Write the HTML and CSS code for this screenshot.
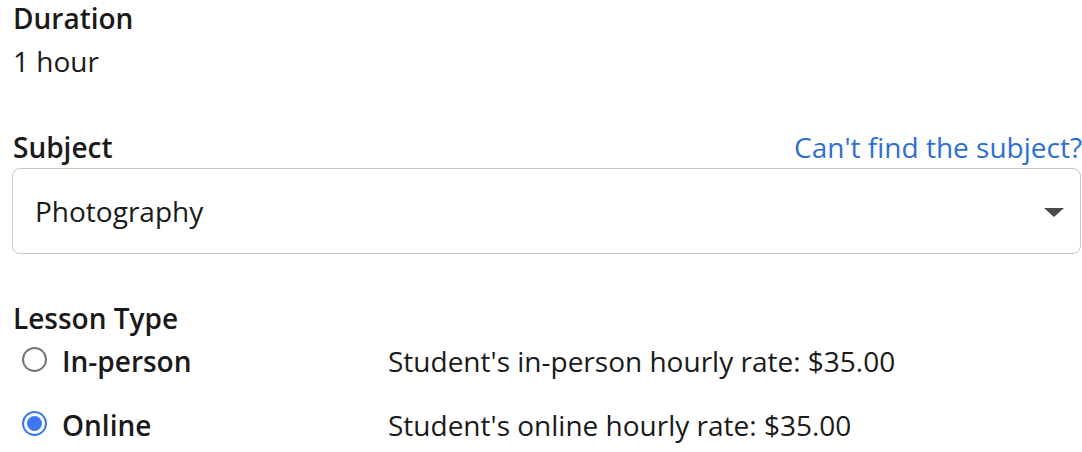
FILE: index.html
```html
<!DOCTYPE html>
<html lang="en">
<head>
    <meta charset="UTF-8">
    <meta name="viewport" content="width=device-width, initial-scale=1.0">
    <title>Lesson details</title>
    <link rel="stylesheet" href="styles.css">
</head>
<body>
    <div class="form">
        <div class="field">
            <div class="label">Duration</div>
            <div class="value">1 hour</div>
        </div>

        <div class="field subject">
            <div class="label-row">
                <div class="label">Subject</div>
                <a class="link" href="#">Can't find the subject?</a>
            </div>
            <div class="select">
                <span>Photography</span>
                <span class="caret"></span>
            </div>
        </div>

        <div class="field lesson">
            <div class="label">Lesson Type</div>
            <div class="option">
                <label class="choice"><span class="radio"></span>In-person</label>
                <span class="rate">Student's in-person hourly rate: $35.00</span>
            </div>
            <div class="option">
                <label class="choice"><span class="radio checked"></span>Online</label>
                <span class="rate">Student's online hourly rate: $35.00</span>
            </div>
        </div>
    </div>
</body>
</html>
```

FILE: styles.css
```css
/* Base */
body {
    margin: 0;
    font-family: 'Open Sans', sans-serif;
    font-size: 28px;
    line-height: 36px;
    color: #1a1a1a;
    background: #fff;
}

.form {
    padding: 0 0 0 13px;
}

.label {
    font-weight: 600;
}

.value {
    margin-top: 7px;
}

/* Subject */
.subject {
    margin-top: 50px;
}

.label-row {
    display: flex;
    justify-content: space-between;
    align-items: baseline;
    white-space: nowrap;
}

.link {
    color: #2e6fd1;
    text-decoration: none;
}

.select {
    margin-top: 3px;
    margin-left: -1px;
    margin-right: 1px;
    height: 84px;
    border: 1px solid #c6c6c6;
    border-radius: 8px;
    display: flex;
    align-items: center;
    justify-content: space-between;
    padding: 0 16px 0 22px;
}

.caret {
    width: 0;
    height: 0;
    margin-top: 2px;
    border-left: 10px solid transparent;
    border-right: 10px solid transparent;
    border-top: 9px solid #4a4a4a;
}

/* Lesson type */
.lesson {
    margin-top: 46px;
}

.option {
    display: flex;
    align-items: center;
    margin-top: 7px;
}

.option + .option {
    margin-top: 28px;
}

.choice {
    width: 375px;
    display: flex;
    align-items: center;
    font-weight: 600;
}

.radio {
    width: 21px;
    height: 21px;
    border: 2px solid #777;
    border-radius: 50%;
    margin: -3px 15px 0 9px;
    box-sizing: content-box;
    position: relative;
}

.radio.checked {
    border-color: #3a78f2;
}

.radio.checked::after {
    content: '';
    position: absolute;
    top: 3px;
    left: 3px;
    width: 15px;
    height: 15px;
    border-radius: 50%;
    background: #3a78f2;
}
```
